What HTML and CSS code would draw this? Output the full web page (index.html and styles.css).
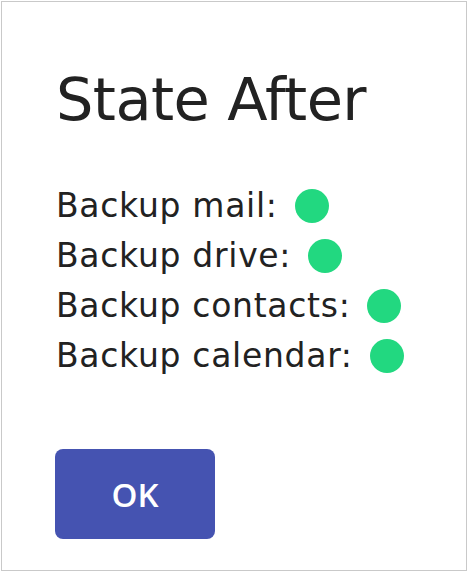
FILE: index.html
```html
<!DOCTYPE html>
<html>
<head>
<meta charset="utf-8">
<link rel="stylesheet" href="styles.css">
</head>
<body>
<div class="card">
  <h1 class="title">State After</h1>
  <ul class="states">
    <li class="state">Backup mail: <span class="dot"></span></li>
    <li class="state">Backup drive: <span class="dot"></span></li>
    <li class="state">Backup contacts: <span class="dot"></span></li>
    <li class="state">Backup calendar: <span class="dot"></span></li>
  </ul>
  <button class="ok">OK</button>
</div>
</body>
</html>
```

FILE: styles.css
```css
html, body {
  margin: 0;
  padding: 0;
  background: #fff;
}
body {
  font-family: "DejaVu Sans", "Open Sans", sans-serif;
  color: #222;
}
.card {
  margin: 1px;
  width: 466px;
  height: 570px;
  box-sizing: border-box;
  border: 1px solid #c9c9c9;
  padding: 63px 0 0 54px;
  display: flex;
  flex-direction: column;
  align-items: flex-start;
}
.title {
  margin: 0;
  font-size: 59px;
  font-weight: 400;
  line-height: 70px;
  letter-spacing: -0.6px;
}
.states {
  list-style: none;
  margin: 46px 0 0 0;
  padding: 0;
}
.state {
  display: flex;
  align-items: center;
  gap: 17px;
  font-size: 33px;
  line-height: 50px;
  height: 50px;
  letter-spacing: 0.7px;
}
.dot {
  width: 34px;
  height: 34px;
  border-radius: 50%;
  background: #22d880;
  flex: none;
}
.ok {
  margin-top: 68px;
  margin-left: -1px;
  width: 160px;
  height: 90px;
  border: none;
  border-radius: 8px;
  background: #4553b1;
  color: #fff;
  font-family: "Open Sans", sans-serif;
  font-size: 33px;
  font-weight: 600;
  padding: 0;
}
```
